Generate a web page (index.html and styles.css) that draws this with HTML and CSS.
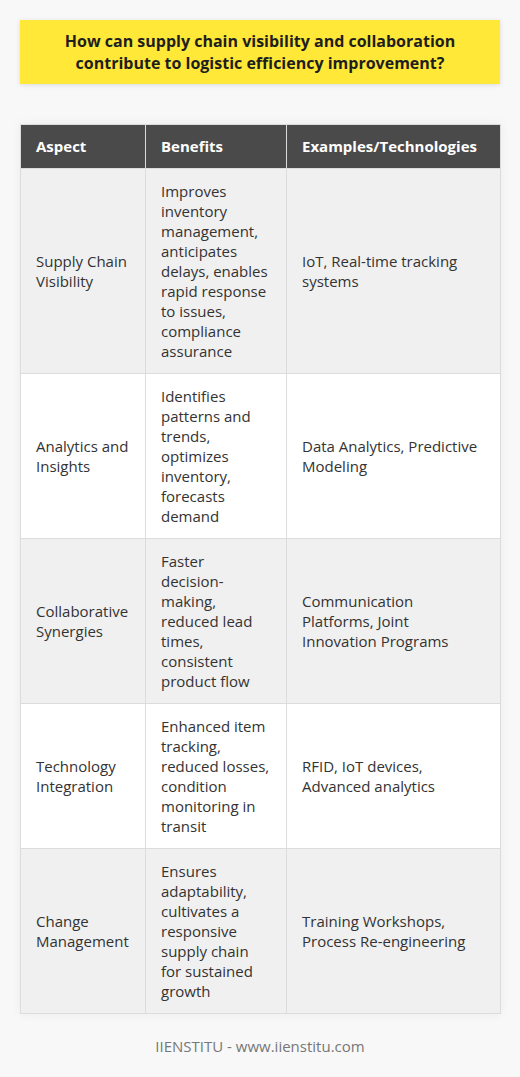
FILE: index.html
```html
<!DOCTYPE html>
<html>
<head>
<meta charset="utf-8">
<link rel="stylesheet" href="styles.css">
</head>
<body>
<div class="page">
  <h1 class="title">How can supply chain visibility and collaboration contribute to logistic efficiency improvement?</h1>
  <table class="grid">
    <colgroup><col class="c1"><col class="c2"><col class="c3"></colgroup>
    <thead>
      <tr><th>Aspect</th><th>Benefits</th><th>Examples/Technologies</th></tr>
    </thead>
    <tbody>
      <tr><td>Supply Chain Visibility</td><td>Improves inventory management, anticipates delays, enables rapid response to issues, compliance assurance</td><td>IoT, Real-time tracking systems</td></tr>
      <tr><td>Analytics and Insights</td><td>Identifies patterns and trends, optimizes inventory, forecasts demand</td><td>Data Analytics, Predictive Modeling</td></tr>
      <tr><td>Collaborative Synergies</td><td>Faster<br>decision-making, reduced lead times, consistent product flow</td><td>Communication Platforms, Joint Innovation Programs</td></tr>
      <tr><td>Technology Integration</td><td>Enhanced item tracking, reduced losses, condition monitoring in transit</td><td>RFID, IoT devices, Advanced analytics</td></tr>
      <tr><td>Change Management</td><td>Ensures adaptability, cultivates a responsive supply chain for sustained growth</td><td>Training Workshops, Process Re-engineering</td></tr>
    </tbody>
  </table>
  <p class="footer">IIENSTITU - www.iienstitu.com</p>
</div>
</body>
</html>
```

FILE: styles.css
```css
html, body {
  margin: 0;
  padding: 0;
  background: #f8f8f8;
}
body {
  font-family: "Open Sans", "DejaVu Sans", sans-serif;
  color: #333;
}
.page {
  padding: 20px 20px 0 20px;
}
.title {
  margin: 0;
  background: #ffe838;
  color: #1e1e1e;
  font-size: 16px;
  font-weight: 700;
  line-height: 22px;
  text-align: center;
  padding: 10px 40px;
  box-shadow: 0 1px 5px rgba(0, 0, 0, 0.12);
}
.grid {
  margin-top: 40px;
  width: 480px;
  border-collapse: collapse;
  table-layout: fixed;
  font-size: 15px;
  line-height: 20px;
  box-shadow: 0 0 10px rgba(0, 0, 0, 0.06);
}
.c1 { width: 125px; }
.c2 { width: 141px; }
.c3 { width: 214px; }
.grid th, .grid td {
  border: 1px solid #dcdcdc;
  padding: 12px 15px;
  text-align: left;
  vertical-align: middle;
}
.grid th {
  background: #4a4a4a;
  color: #fff;
  font-weight: 700;
  line-height: 19px;
}
.grid tbody tr:nth-child(odd) td { background: #f0f0f0; }
.grid tbody tr:nth-child(even) td { background: #ffffff; }
.footer {
  margin: 22px 0 0 0;
  text-align: center;
  color: #777;
  font-size: 15px;
  line-height: 20px;
}
```
